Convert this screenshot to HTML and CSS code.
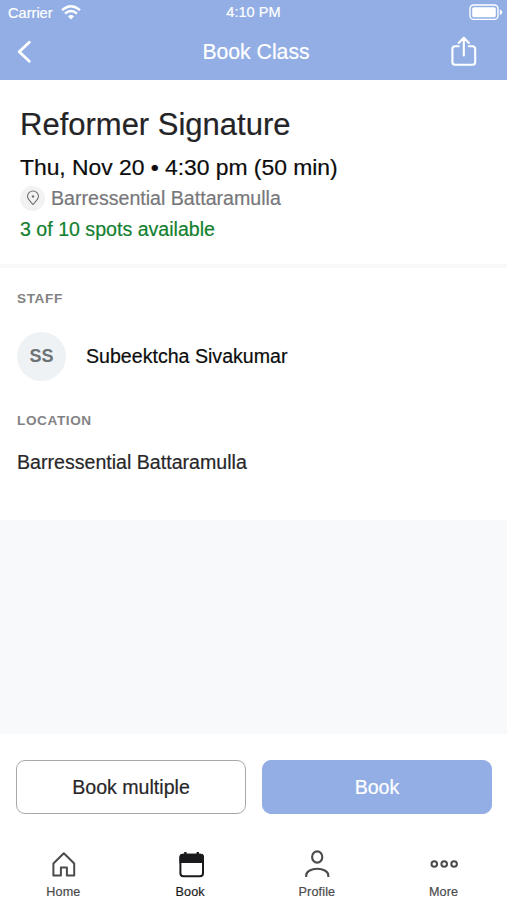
FILE: index.html
```html
<!DOCTYPE html>
<html lang="en">
<head>
<meta charset="utf-8">
<title>Book Class</title>
<link rel="stylesheet" href="styles.css">
</head>
<body>
<div class="screen">
  <header class="header">
    <div class="status">
      <div class="carrier">
        <span>Carrier</span>
        <svg width="20" height="15" viewBox="0 0 20 15" fill="none" stroke="#fff" stroke-width="2.4"><path d="M1 5.2Q10-2.6 19 5.2M4 8.6Q10 3.4 16 8.6"/><path d="M10 14.4L6.9 11.2Q10 8.6 13.1 11.2Z" fill="#fff" stroke="none"/></svg>
      </div>
      <span class="time">4:10 PM</span>
      <svg class="battery" width="34" height="17" viewBox="0 0 34 17"><rect x="1" y="1" width="28" height="14.4" rx="3.6" fill="none" stroke="#fff" stroke-width="1.4"/><rect x="3.2" y="3.2" width="23.6" height="10" rx="1.6" fill="#fff"/><path d="M30.8 5.4Q33.2 6.2 33.2 8.2T30.8 11Z" fill="#fff"/></svg>
    </div>
    <div class="navbar">
      <svg class="back" width="16" height="24" viewBox="0 0 16 24" fill="none" stroke="#fff" stroke-width="2.8" stroke-linecap="round" stroke-linejoin="round"><path d="M12.3 2.2L2.2 11.8L12.3 21.2"/></svg>
      <h1 class="nav-title">Book Class</h1>
      <svg class="share" width="28" height="32" viewBox="0 0 28 32" fill="none" stroke="#fff" stroke-width="2.1" stroke-linecap="round" stroke-linejoin="round"><path d="M8.8 10.2H5.2Q2.4 10.2 2.4 13V26Q2.4 28.8 5.2 28.8H22.4Q25.2 28.8 25.2 26V13Q25.2 10.2 22.4 10.2H18.8M13.8 19.5V2M8.7 7L13.8 1.8L18.9 7"/></svg>
    </div>
  </header>
  <section class="summary">
    <h2 class="class-name">Reformer Signature</h2>
    <p class="when">Thu, Nov 20 • 4:30 pm (50 min)</p>
    <div class="place">
      <span class="pin"><svg width="14" height="16" viewBox="0 0 14 16" fill="none" stroke="#707070" stroke-width="1.1"><path d="M7 14.5C4.6 11.9 1.5 9.1 1.5 6.3A5.5 5.3 0 0 1 12.5 6.3C12.5 9.1 9.4 11.9 7 14.5Z"/><circle cx="7" cy="6.5" r="1.2" fill="#707070" stroke="none"/></svg></span>
      <span class="place-name">Barressential Battaramulla</span>
    </div>
    <p class="spots">3 of 10 spots available</p>
  </section>
  <section class="details">
    <h3 class="label">STAFF</h3>
    <div class="staff">
      <span class="avatar">SS</span>
      <span class="staff-name">Subeektcha Sivakumar</span>
    </div>
    <h3 class="label">LOCATION</h3>
    <p class="location">Barressential Battaramulla</p>
  </section>
  <div class="spacer"></div>
  <div class="actions">
    <button class="btn outline">Book multiple</button>
    <button class="btn primary">Book</button>
  </div>
  <nav class="tabs">
    <a class="tab"><svg width="30" height="30" viewBox="0 0 30 30" fill="none" stroke="#4b4b4d" stroke-width="2" stroke-linejoin="round"><path d="M5.4 26.4V14.5L15.8 4.2L26.2 14.5V26.4H18.9V18.4H12.9V26.4Z"/></svg><span>Home</span></a>
    <a class="tab active"><svg width="30" height="30" viewBox="0 0 30 30" fill="none" stroke="#1b1b1e" stroke-width="2"><rect x="5.4" y="5.8" width="22.6" height="21.4" rx="3"/><path d="M5.4 13V8.2Q5.4 5.8 8 5.8H25.6Q28 5.8 28 8.2V13Z" fill="#1b1b1e"/><path d="M10.4 3V7M22.8 3V7" stroke-width="2.4"/></svg><span>Book</span></a>
    <a class="tab"><svg width="30" height="30" viewBox="0 0 30 30" fill="none" stroke="#4b4b4d" stroke-width="2.1"><ellipse cx="15.2" cy="8" rx="5.1" ry="5.6"/><path d="M4.2 28V26.4C4.2 17.6 26.3 17.6 26.3 26.4V28"/></svg><span>Profile</span></a>
    <a class="tab"><svg width="30" height="30" viewBox="0 0 30 30" fill="none" stroke="#4b4b4d" stroke-width="2"><circle cx="5.3" cy="15" r="2.8"/><circle cx="15.2" cy="15" r="2.8"/><circle cx="25.1" cy="15" r="2.8"/></svg><span>More</span></a>
  </nav>
</div>
</body>
</html>
```
FILE: styles.css
```css
* { box-sizing: border-box; }
body, h1, h2, h3, p { margin: 0; font-weight: 400; }
svg { display: block; flex: none; }
body { font-family: "Liberation Sans", Arial, sans-serif; background: #fff; -webkit-text-stroke: .2px currentColor; }
.screen { width: 507px; height: 900px; display: flex; flex-direction: column; overflow: hidden; }

.header { height: 80px; flex: none; background: #92aee4; color: #fff; }
.status { height: 25px; display: grid; grid-template-columns: 1fr auto 1fr; align-items: center; padding: 0 4px 0 8px; font-size: 14.6px; }
.carrier { display: flex; align-items: center; gap: 8px; }
.time { margin-top: -2px; padding-right: 4px; }
.battery { justify-self: end; }
.navbar { height: 54px; display: grid; grid-template-columns: 1fr auto 1fr; align-items: center; padding: 0 29px 0 17px; }
.nav-title { font-size: 21.2px; padding-left: 17px; }
.share { justify-self: end; }

.summary { height: 188px; flex: none; padding: 26px 20px 0; border-bottom: 4px solid #f7f8f9; }
.class-name { font-size: 31px; line-height: 38px; color: #242426; }
.when { font-size: 22.9px; line-height: 28px; margin-top: 9px; letter-spacing: -.03px; color: #0c0c0c; }
.place { display: flex; align-items: center; gap: 6px; height: 32px; margin-top: 1px; }
.pin { width: 25px; height: 25px; border-radius: 50%; background: #f2f2f3; display: flex; align-items: center; justify-content: center; }
.place-name { font-size: 19.6px; color: #77777a; }
.spots { font-size: 19.6px; line-height: 30px; color: #138030; }

.details { height: 252px; flex: none; padding: 23px 17px 0; }
.label { font-size: 13.6px; font-weight: 700; line-height: 16px; letter-spacing: .6px; color: #838385; -webkit-text-stroke: 0; }
.staff { display: flex; align-items: center; gap: 20px; height: 49px; margin: 25px 0 32px; }
.avatar { width: 49px; height: 49px; border-radius: 50%; background: #eff2f4; display: flex; align-items: center; justify-content: center; font-size: 18px; font-weight: 700; color: #6d7276; -webkit-text-stroke: 0; }
.staff-name { font-size: 19.6px; color: #0c0c0c; }
.location { font-size: 19.6px; line-height: 24px; margin-top: 21px; color: #272729; }

.spacer { flex: 1; background: #f7f9fb; }
.actions { height: 106px; flex: none; display: grid; grid-template-columns: 1fr 1fr; gap: 16px; padding: 26px 15px 0 16px; align-items: start; }
.btn { height: 54px; border: 1px solid #a8a8aa; border-radius: 9px; font: 19.6px "Liberation Sans", Arial, sans-serif; background: #fff; color: #272729; padding: 0; }
.primary { background: #92aee4; border-color: #92aee4; color: #fff; }
.tabs { height: 60px; flex: none; display: grid; grid-template-columns: repeat(4, 1fr); }
.tab { display: flex; flex-direction: column; align-items: center; padding-top: 9px; gap: 5px; font-size: 12.6px; line-height: 16px; letter-spacing: .15px; color: #4b4b4d; }
.active { color: #1b1b1e; }
```
